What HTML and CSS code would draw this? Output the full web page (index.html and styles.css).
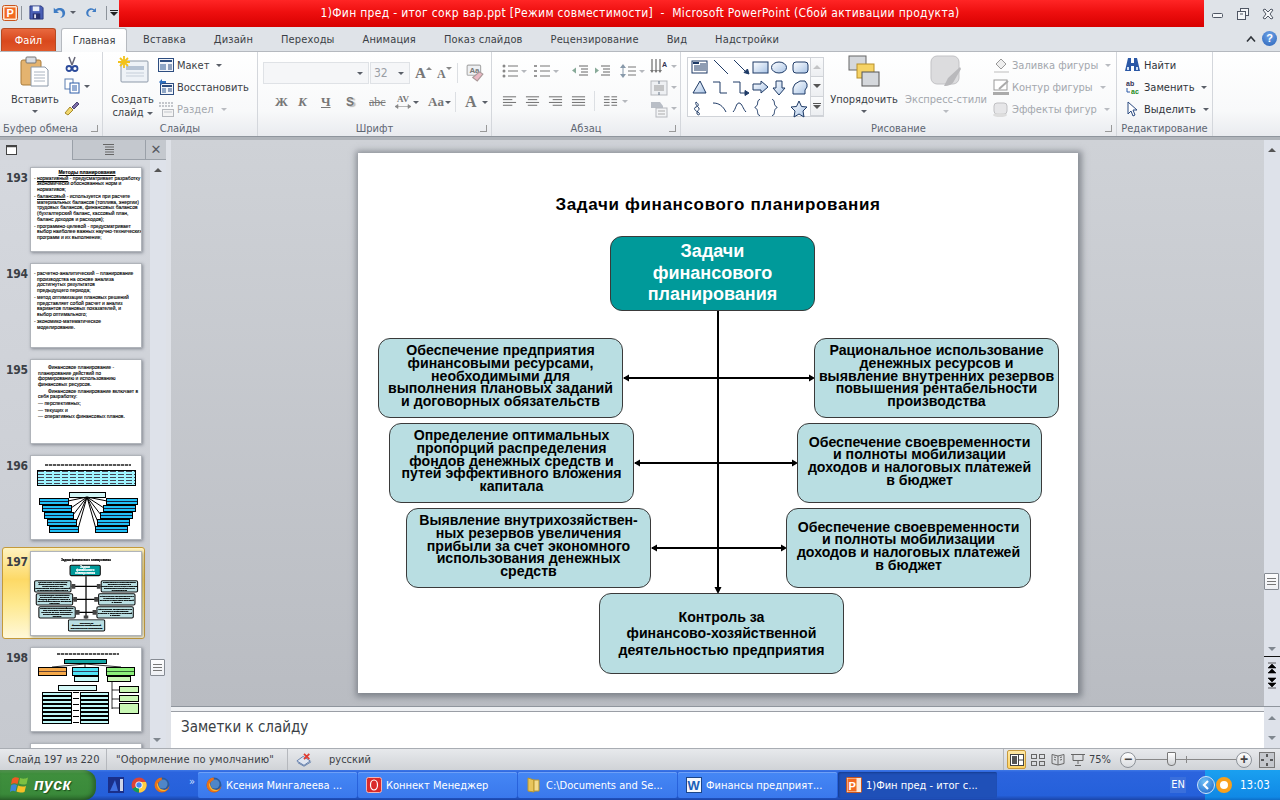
FILE: index.html
```html
<!DOCTYPE html>
<html lang="ru">
<head>
<meta charset="utf-8">
<title>PowerPoint</title>
<link rel="stylesheet" href="styles.css">
</head>
<body>
<svg class="defs" width="0" height="0">
  <defs>
    <linearGradient id="gblue" x1="0" y1="0" x2="1" y2="1"><stop offset="0" stop-color="#fff"/><stop offset="1" stop-color="#a9c4e6"/></linearGradient>
    <symbol id="ff" viewBox="0 0 16 16"><circle cx="8" cy="8" r="7.500" fill="#2a5a9e"/><circle cx="9" cy="7" r="4.500" fill="#4f86c8"/><path d="M8 .5A7.500 7.500 0 1 0 15.500 8C15 11 12 13 9 13 5.500 13 3.500 10 4 7 4.500 5 6 3.500 8 3 7.500 2 7.800 1 8 .5z" fill="#e8701a"/><path d="M3 6C2.500 9 4 13 8 14c2 .3 4-.3 5-1.500C10 13.500 5 13 4 7z" fill="#f7b52c"/></symbol>
    <symbol id="chrome" viewBox="0 0 16 16"><circle cx="8" cy="8" r="7.500" fill="#db4437"/><path d="M8 8 1.500 11.700A7.500 7.500 0 0 0 8 15.500z" fill="#0f9d58"/><path d="M8 15.500A7.500 7.500 0 0 0 15 5H8z" fill="#ffcd40"/><circle cx="8" cy="8" r="3.600" fill="#fff"/><circle cx="8" cy="8" r="2.700" fill="#4285f4"/></symbol>
  </defs>
</svg>

<header class="titlebar">
  <div class="qat">
    <svg class="ic16 logo" viewBox="0 0 16 16"><rect x=".5" y=".5" width="15" height="15" rx="2" fill="#fbe8d6" stroke="#c9541d"/><rect x="2.500" y="2.500" width="11" height="11" fill="#f26a21"/><text x="4.500" y="12" class="logo-p">P</text></svg>
    <span class="qsep"></span>
    <svg class="ic16 save" viewBox="0 0 16 16"><path d="M1 1h12l2 2v12H1z" fill="#4a5fb5" stroke="#2b3a80"/><rect x="4" y="1.500" width="7" height="5" fill="#e9eef7"/><rect x="4" y="9" width="8" height="6" fill="#26306e"/><rect x="5.500" y="10" width="2" height="4" fill="#dde"/></svg>
    <svg class="ic16 undo" viewBox="0 0 16 16"><path d="M2 2v6h6L5.700 5.800C8 4 12 5 12 9c0 2-1 3.500-3 4.500 4 0 6-2.500 6-5.500 0-5-6-7.500-10.800-4z" fill="#3f7cc4"/></svg>
    <span class="caret qc"></span>
    <svg class="ic16 redo" viewBox="0 0 16 16"><path d="M13.500 2.500v5h-5l2-2C8 3.500 4 5.500 4 9c0 2 1.500 3.800 4 4-4 1-6.500-1.500-6.500-4.500C1.500 4 7 .5 11.500 4.200z" fill="#3f7cc4"/></svg>
    <span class="qsep s2"></span>
    <span class="custom"><i></i><b class="caret"></b></span>
  </div>
  <div class="title-red">1)Фин пред - итог сокр вар.ppt [Режим совместимости]&nbsp; -&nbsp; Microsoft PowerPoint (Сбой активации продукта)</div>
  <div class="winctl">
    <svg width="12" height="12" viewBox="0 0 12 12"><rect x=".5" y="5.500" width="10" height="4" rx="1" fill="#f4f6f8" stroke="#4f5663"/></svg>
    <svg width="12" height="12" viewBox="0 0 12 12"><rect x="3.500" y=".5" width="8" height="7" fill="#f4f6f8" stroke="#4f5663"/><rect x=".5" y="3.500" width="8" height="8" fill="#f4f6f8" stroke="#4f5663"/><path d="M3 6h3" stroke="#4f5663"/></svg>
    <svg width="12" height="12" viewBox="0 0 12 12"><path d="M1 2 3 1l3 3 3-3 2 1-3 4 3 4-2 1-3-3-3 3-2-1 3-4z" fill="#f4f6f8" stroke="#4f5663"/></svg>
  </div>
</header>

<nav class="tabs">
  <span class="tab-file">Файл</span>
  <span class="tab active">Главная</span>
  <span class="tab">Вставка</span>
  <span class="tab">Дизайн</span>
  <span class="tab">Переходы</span>
  <span class="tab">Анимация</span>
  <span class="tab">Показ слайдов</span>
  <span class="tab">Рецензирование</span>
  <span class="tab">Вид</span>
  <span class="tab">Надстройки</span>
  <span class="tab-right">
    <svg width="10" height="8" viewBox="0 0 10 8"><path d="M1 6.500 5 2l4 4.500" fill="none" stroke="#30343a" stroke-width="1.600"/></svg>
    <span class="help">?</span>
  </span>
</nav>

<section class="ribbon">
  <div class="group g-clip">
    <div class="gbody">
      <div class="big paste">
        <svg class="bigic" width="30" height="32" viewBox="0 0 30 32"><rect x="1" y="4" width="20" height="25" rx="2" fill="#e4b36f" stroke="#a97c3c"/><rect x="6" y="1" width="10" height="6" rx="1" fill="#d8dce2" stroke="#777"/><path d="M11 11h14l3 3v16H11z" fill="#fff" stroke="#8b98a8"/><path d="M14 16h11M14 19h11M14 22h11M14 25h11" stroke="#aab4c0"/></svg>
        <span class="blabel">Вставить</span>
        <span class="caret"></span>
      </div>
      <div class="smalls icons-only">
        <svg class="ic16" viewBox="0 0 16 16"><path d="M5 1l3 8M11 1 8 9" stroke="#667" stroke-width="1.500"/><circle cx="5" cy="12.500" r="2.500" fill="none" stroke="#2b4a9a" stroke-width="1.800"/><circle cx="11" cy="12.500" r="2.500" fill="none" stroke="#2b4a9a" stroke-width="1.800"/></svg>
        <span class="row-ic"><svg class="ic16" viewBox="0 0 16 16"><rect x="1" y="1" width="8" height="10" fill="#fff" stroke="#5b7cb0"/><rect x="6" y="5" width="9" height="10" fill="#fff" stroke="#2c5ca8"/><path d="M8 8h5M8 10h5M8 12h5" stroke="#2c5ca8"/></svg><span class="caret"></span></span>
        <svg class="ic16" viewBox="0 0 16 16"><path d="M1 13l5-6 3 3-5 5z" fill="#f1d76e" stroke="#a68a2a"/><path d="M8 7l5-5 2 2-5 5z" fill="#7b6ea8" stroke="#4a4470"/></svg>
      </div>
    </div>
    <div class="glabel lead">Буфер обмена<i class="launch"></i></div>
  </div>

  <div class="group g-slides">
    <div class="gbody">
      <div class="big newslide">
        <svg class="bigic" width="32" height="28" viewBox="0 0 32 28"><rect x="4" y="5" width="27" height="21" rx="1" fill="#eef2f7" stroke="#8d99a8"/><rect x="9" y="10" width="18" height="4" fill="#b6c3d4"/><path d="M9 17h18M9 20h18" stroke="#c5ced9"/><path d="M7 0v12M1 6h12M3 2l8 8M11 2l-8 8" stroke="#f2c21a" stroke-width="1.800"/></svg>
        <span class="blabel">Создать</span>
        <span class="blabel">слайд <span class="caret"></span></span>
      </div>
      <div class="smalls">
        <div class="srow"><svg class="ic16" viewBox="0 0 16 16"><rect x=".5" y="1.500" width="15" height="13" fill="#f2f5fa" stroke="#2d4d80"/><rect x="2" y="3" width="12" height="2" fill="#2d4d80"/><rect x="2" y="7" width="6" height="6" fill="#8ea6c6"/><path d="M10 8h4M10 10h4M10 12h4" stroke="#2d4d80"/></svg><span>Макет</span><span class="caret"></span></div>
        <div class="srow"><svg class="ic16" viewBox="0 0 16 16"><rect x="2.500" y="4.500" width="13" height="11" fill="#f2f5fa" stroke="#2d4d80"/><rect x="4" y="6" width="10" height="2" fill="#2d4d80"/><rect x="4" y="9" width="4" height="5" fill="#8ea6c6"/><path d="M10 10h4M10 12h4" stroke="#2d4d80"/><path d="M1 3l3-3v2h4v2H4v2z" fill="#2d6fc0"/></svg><span>Восстановить</span></div>
        <div class="srow off"><svg class="ic16" viewBox="0 0 16 16"><path d="M1 2h14M1 5h14" stroke="#c4c7cc" stroke-dasharray="2 1" stroke-width="2"/><rect x="4.500" y="8.500" width="11" height="7" fill="#f4f4f4" stroke="#b5b8bd"/><path d="M6 11h8" stroke="#c4c7cc"/></svg><span>Раздел</span><span class="caret"></span></div>
      </div>
    </div>
    <div class="glabel">Слайды</div>
  </div>

  <div class="group g-font">
    <div class="gbody col">
      <div class="frow r1">
        <span class="combo cfont"><span class="caret"></span></span>
        <span class="combo csize"><em>32</em><span class="caret"></span></span>
        <span class="fbtn bigA">A<sup class="up"></sup></span>
        <span class="fbtn smallA">A<sup class="dn"></sup></span>
        <i class="vsep"></i>
        <svg class="ic16 eraser" viewBox="0 0 16 16"><rect x="1" y="1" width="12" height="9" rx="1" fill="#eef0f3" stroke="#aaa"/><text x="3" y="8" class="tiny">Aa</text><path d="M6 12l6-5 3 2-5 6z" fill="#e9b9c4" stroke="#a99"/></svg>
      </div>
      <div class="frow r2">
        <b class="fm serif">Ж</b><b class="fm serif it">К</b><b class="fm serif ul">Ч</b><b class="fm shadow">S</b><span class="fm strike">abc</span>
        <span class="fm av"><b>AV</b><svg width="16" height="5" viewBox="0 0 16 5"><path d="M0 2.500h16M0 2.500l3-2v4zM16 2.500l-3-2v4z" fill="#888" stroke="#888" stroke-width=".6"/></svg></span><span class="caret"></span>
        <span class="fm aa">Aa</span><span class="caret"></span>
        <i class="vsep"></i>
        <b class="fm colorA">A</b><span class="caret"></span>
      </div>
    </div>
    <div class="glabel">Шрифт<i class="launch"></i></div>
  </div>

  <div class="group g-para">
    <div class="gbody para">
      <div class="pmain">
        <div class="frow pr1">
          <svg class="ic16" viewBox="0 0 16 16"><g fill="#888"><circle cx="2" cy="3" r="1.500"/><circle cx="2" cy="8" r="1.500"/><circle cx="2" cy="13" r="1.500"/></g><path d="M6 3h10M6 8h10M6 13h10" stroke="#777"/></svg><span class="caret"></span>
          <svg class="ic16" viewBox="0 0 16 16"><path d="M0 2h3v2H0zM0 7h3v2H0zM0 12h3v2H0z" fill="#999"/><path d="M6 3h10M6 8h10M6 13h10" stroke="#777"/></svg><span class="caret"></span>
          <svg class="ic16 gapl" viewBox="0 0 16 16"><path d="M7 3h9M9 6h7M9 9h7M7 12h9" stroke="#666"/><path d="M0 7.500l4-3v6z" fill="#8a9"/></svg>
          <svg class="ic16" viewBox="0 0 16 16"><path d="M7 3h9M9 6h7M9 9h7M7 12h9" stroke="#666"/><path d="M5 7.500l-4-3v6z" fill="#8a9"/></svg>
          <svg class="ic16 gapl2" viewBox="0 0 16 16"><path d="M3 1l3 4H0zM3 15l3-4H0z" fill="#89a"/><path d="M3 5v6" stroke="#89a"/><path d="M8 4h8M8 8h8M8 12h8" stroke="#777"/></svg><span class="caret"></span>
        </div>
        <div class="frow pr2">
          <svg class="ic16" viewBox="0 0 16 16"><path d="M1 3h14M1 6h10M1 9h14M1 12h10" stroke="#666"/></svg>
          <svg class="ic16" viewBox="0 0 16 16"><path d="M1 3h14M3 6h10M1 9h14M3 12h10" stroke="#666"/></svg>
          <svg class="ic16" viewBox="0 0 16 16"><path d="M1 3h14M5 6h10M1 9h14M5 12h10" stroke="#666"/></svg>
          <svg class="ic16" viewBox="0 0 16 16"><path d="M1 3h14M1 6h14M1 9h14M1 12h14" stroke="#666"/></svg>
          <i class="vsep"></i>
          <svg class="ic16" viewBox="0 0 16 16"><path d="M1 3h6M1 6h6M1 9h6M1 12h6M9 3h6M9 6h6M9 9h6M9 12h6" stroke="#666"/></svg><span class="caret"></span>
        </div>
      </div>
      <div class="pside">
        <div class="prow"><svg class="ic18" viewBox="0 0 18 18"><path d="M2 1v12M6 1v12M10 1v12" stroke="#777" stroke-width="1.300"/><path d="M0 12l2 3 2-3zM4 12l2 3 2-3zM8 12l2 3 2-3z" fill="#777"/><text x="12" y="9" class="tiny dark">A</text></svg><span class="caret"></span></div>
        <div class="prow"><svg class="ic18" viewBox="0 0 18 18"><rect x="1" y="2" width="16" height="14" fill="#eef0f3" stroke="#b5b8bd"/><path d="M4 7h10M4 9h10M4 11h10" stroke="#999"/><path d="M9 2v3M9 16v-3" stroke="#678"/></svg><span class="caret"></span></div>
        <div class="prow"><svg class="ic18" viewBox="0 0 18 18"><path d="M1 2h9l3 4v2H1z" fill="#b9bec6"/><rect x="6" y="8" width="11" height="9" fill="#f3f4f6" stroke="#b5b8bd"/><path d="M8 11h7M8 14h7" stroke="#aaa"/></svg><span class="caret"></span></div>
      </div>
    </div>
    <div class="glabel">Абзац<i class="launch"></i></div>
  </div>

  <div class="group g-draw">
    <div class="gbody">
      <div class="gallery">
        <svg class="shapes" width="120" height="60" viewBox="0 0 120 60" fill="url(#gblue)" stroke="#1e3a66">
          <rect x="3" y="3" width="15" height="12" fill="#fff"/><rect x="4" y="4" width="6" height="2" fill="#1e3a66" stroke="none"/><path d="M11 6h6M5 8h12M5 10h12M5 12h12" fill="none"/>
          <path d="M25 2l14 14M45 2l13 13" fill="none"/><path d="M60 16l-5-1.500 3.500-3.500z" fill="#1e3a66"/>
          <rect x="64" y="4" width="15" height="11"/><ellipse cx="90" cy="9.500" rx="7.500" ry="5.500"/><rect x="104" y="4" width="15" height="11" rx="3"/>
          <path d="M11 23l6 12H4z"/><path d="M24 24h7v11h7M44 24h7v11h6" fill="none"/><path d="M60 35l-4-2.500v5z" fill="#1e3a66"/>
          <path d="M64 26h8v-3l7 6-7 6v-3h-8z"/><path d="M87 23h6v7h3l-6 7-6-7h3z"/><path d="M106 26l5-3h5l2 3v3l-2 3v4h-12v-6z"/>
          <path d="M7 44c3 2 3 4 0 5s-1 4 2 5c3 2 1 4-1 2-1-3 3-4 2-6-2-2-4-4-3-6z" fill="none"/><path d="M24 45c6 0 10 3 13 9M44 54c3-3 3-9 6-9s4 6 7 9" fill="none"/>
          <path d="M71 43c-3 0-2 5-3 6s-2 1-2 2 1 0 2 2 0 6 3 6M83 43c3 0 2 5 3 6s2 1 2 2-1 0-2 2 0 6-3 6" fill="none" transform="translate(0 -1.500)"/>
          <path d="M110 43l2.500 5.500 5.500.5-4 4 1 6-5-3-5 3 1-6-4-4 5.500-.5z"/>
        </svg>
        <div class="gscroll"><span><i class="tri up off"></i></span><span><i class="tri"></i></span><span><i class="bar"></i><i class="tri"></i></span></div>
      </div>
      <div class="big arrange">
        <svg class="bigic" width="32" height="32" viewBox="0 0 32 32"><rect x="1" y="1" width="17" height="14" fill="#d5d8dc" stroke="#666"/><rect x="9" y="9" width="17" height="14" fill="#f6d365" stroke="#b8902a"/><rect x="14" y="17" width="17" height="14" fill="#d5d8dc" stroke="#555"/></svg>
        <span class="blabel">Упорядочить</span>
        <span class="caret"></span>
      </div>
      <div class="big express off">
        <svg class="bigic" width="32" height="32" viewBox="0 0 32 32"><rect x="1" y="1" width="28" height="28" rx="6" fill="#dcdcde" stroke="#c2c2c5"/><path d="M30 12 18 23l-4 8c5 0 9-2 10-5l7-12z" fill="#b9b9bc"/></svg>
        <span class="blabel">Экспресс-стили</span>
        <span class="caret"></span>
      </div>
      <div class="smalls shapefmt">
        <div class="srow off"><svg class="ic16" viewBox="0 0 16 16"><path d="M3 7l5-5 5 5-5 5z" fill="#eee" stroke="#999"/><path d="M1 14h15v2H1z" fill="#ddd"/></svg><span>Заливка фигуры</span><span class="caret"></span></div>
        <div class="srow off"><svg class="ic16" viewBox="0 0 16 16"><rect x="1" y="1" width="13" height="10" fill="#fff" stroke="#999"/><path d="M6 10 15 2" stroke="#aaa" stroke-width="2"/><rect x="0" y="13" width="16" height="3" fill="#aaa"/></svg><span>Контур фигуры</span><span class="caret"></span></div>
        <div class="srow off"><svg class="ic16" viewBox="0 0 16 16"><rect x="1" y="2" width="13" height="11" rx="3" fill="#e6e6e8" stroke="#c0c0c3"/><ellipse cx="7" cy="14" rx="7" ry="2" fill="#ddd"/></svg><span>Эффекты фигур</span><span class="caret"></span></div>
      </div>
    </div>
    <div class="glabel">Рисование<i class="launch"></i></div>
  </div>

  <div class="group g-edit">
    <div class="gbody">
      <div class="smalls">
        <div class="srow dark"><svg class="ic16" viewBox="0 0 16 16"><path d="M3 1h3v5h3V1h3l3 13H9V9H6v5H0z" fill="#2b58a6"/><path d="M2 10h2v3H2zM11 10h2v3h-2z" fill="#cfe0f5"/></svg><span>Найти</span></div>
        <div class="srow dark"><svg class="ic16" viewBox="0 0 16 16"><text x="1" y="7" class="tiny dark">ab</text><text x="6" y="15" class="tiny green">ac</text><path d="M2 9v4h3" fill="none" stroke="#2b58a6"/></svg><span>Заменить</span><span class="caret"></span></div>
        <div class="srow dark"><svg class="ic16" viewBox="0 0 16 16"><path d="M3 1v12l3-3 2 5 2-1-2-5h4z" fill="#fff" stroke="#2b4a80"/></svg><span>Выделить</span><span class="caret"></span></div>
      </div>
    </div>
    <div class="glabel">Редактирование</div>
  </div>
</section>

<main class="work">
  <aside class="panel">
    <div class="ptabs">
      <span class="ptab on"><svg width="12" height="11" viewBox="0 0 12 11"><rect x=".5" y=".5" width="10" height="9" fill="#fff" stroke="#444"/><path d="M1 1.500h9" stroke="#444" stroke-width="1.500"/></svg></span>
      <span class="ptab lines"><svg width="12" height="11" viewBox="0 0 12 11"><path d="M0 .5h11M2 3h9M2 5.500h9M2 8h9M2 10.500h9" stroke="#666"/></svg></span>
      <span class="ptab x">✕</span>
    </div>
    <div class="pbody">
      <div class="thumbs">
        <div class="titem"><span class="num">193</span><div class="thumb txt">
          <p class="tt">Методы планирования</p>
          <ul><li><u>нормативный</u> - предусматривает разработку<br>экономически обоснованных норм и<br>нормативов;</li><li><u>балансовый</u> - используется при расчете<br>материальных балансов (топлива, энергии)<br>трудовых балансов, финансовых балансов<br>(бухгалтерский баланс, кассовый план,<br>баланс доходов и расходов);</li><li>программно-целевой - предусматривает<br>выбор наиболее важных научно-технических<br>программ и их выполнение;</li></ul>
        </div></div>
        <div class="titem"><span class="num">194</span><div class="thumb txt t194">
          <ul><li>расчетно-аналитический – планирование<br>производства на основе анализа<br>достигнутых результатов<br>предыдущего периода;</li><li>метод оптимизации плановых решений<br>представляет собой расчет и анализ<br>вариантов плановых показателей, и<br>выбор оптимального;</li><li>экономико-математическое<br>моделирование.</li></ul>
        </div></div>
        <div class="titem"><span class="num">195</span><div class="thumb txt t195">
          <p class="ind">Финансовое планирование -<br>планирование действий по<br>формированию и использованию<br>финансовых ресурсов.</p>
          <p class="ind">Финансовое планирование включает в<br>себя разработку:</p>
          <p class="dash">— перспективных;</p><p class="dash">— текущих и</p><p class="dash">— оперативных финансовых планов.</p>
        </div></div>
        <div class="titem"><span class="num">196</span><div class="thumb t196">
          <div class="m-title"></div>
          <div class="m-cyanbox"></div>
          <div class="m-head"></div>
          <svg class="m-rays" width="110" height="48" viewBox="0 0 110 48" stroke="#000" stroke-width="1"><path d="M56 3 37 7M56 3 40 14M56 3 42 21M56 3 45 28M56 3 47 35M56 3 76 7M56 3 73 14M56 3 70 21M56 3 67 28M56 3 65 35"/></svg>
          <i class="bl b1"></i><i class="bl b2"></i><i class="bl b3"></i><i class="bl b4"></i><i class="bl b5"></i>
          <i class="bl b6"></i><i class="bl b7"></i><i class="bl b8"></i><i class="bl b9"></i><i class="bl b10"></i>
        </div></div>
        <div class="titem current"><span class="num">197</span><div class="thumb t197"><div class="mini-wrap">
          <div class="slide-inner">
            <h2 class="sl-title">Задачи финансового планирования</h2>
            <svg class="conn" width="720" height="540" viewBox="0 0 720 540"><path d="M360 158V435M266 225H455M277 310H438M294 395H427" stroke="#000" stroke-width="8" fill="none"/><path d="M266 210h24v30h-24zM431 210h24v30h-24zM277 295h24v30h-24zM414 295h24v30h-24zM294 380h24v30h-24zM403 380h24v30h-24zM345 415h30v20h-30z" fill="#444"/></svg>
            <div class="nd main n0">Задачи<br>финансового<br>планирования</div>
            <div class="nd n1">Обеспечение предприятия<br>финансовыми ресурсами,<br>необходимыми для<br>выполнения плановых заданий<br>и договорных обязательств</div>
            <div class="nd n2">Определение оптимальных<br>пропорций распределения<br>фондов денежных средств и<br>путей эффективного вложения<br>капитала</div>
            <div class="nd n3">Выявление внутрихозяйствен-<br>ных резервов увеличения<br>прибыли за счет экономного<br>использования денежных<br>средств</div>
            <div class="nd n4">Рациональное использование<br>денежных ресурсов и<br>выявление внутренних резервов<br>повышения рентабельности<br>производства</div>
            <div class="nd n5">Обеспечение своевременности<br>и полноты мобилизации<br>доходов и налоговых платежей<br>в бюджет</div>
            <div class="nd n6">Обеспечение своевременности<br>и полноты мобилизации<br>доходов и налоговых платежей<br>в бюджет</div>
            <div class="nd n7">Контроль за<br>финансово-хозяйственной<br>деятельностью предприятия</div>
          </div>
        </div></div></div>
        <div class="titem"><span class="num">198</span><div class="thumb t198">
          <div class="m-title t2"></div>
          <svg class="m-links" width="110" height="83" viewBox="0 0 110 83" fill="none" stroke="#000" stroke-width=".8"><path d="M54 16 21 19M54 16v3M54 16 90 19M81 34v27M81 42h7M81 51h7M81 60h7"/></svg>
          <i class="c c1"></i><i class="c c2"></i><i class="c c3"></i><i class="c c4"></i><i class="c c5"></i><i class="c c6"></i><i class="c c7"></i><i class="c c8"></i>
          <i class="c c9"></i><i class="c c10"></i><i class="c c11"></i><i class="c c12"></i><i class="c c13"></i>
        </div></div>
        <div class="titem"><span class="num"></span><div class="thumb"></div></div>
      </div>
      <div class="vscroll small-scroll">
        <i class="tri up"></i>
        <span class="thumbgrip g1"><b></b></span>
        <i class="tri dim"></i>
      </div>
    </div>
  </aside>

  <div class="center">
    <div class="editor">
      <div class="stage">
        <div class="slide">
          <div class="slide-inner">
            <h2 class="sl-title">Задачи финансового планирования</h2>
            <svg class="conn" width="720" height="540" viewBox="0 0 720 540">
              <path d="M360 158V435M266 225H455M277 310H438M294 395H427" stroke="#000" stroke-width="2" fill="none"/>
              <path d="M265 225l6-3.500v7zM457 225l-6-3.500v7zM276 310l6-3.500v7zM440 310l-6-3.500v7zM293 395l6-3.500v7zM429 395l-6-3.500v7zM360 441l-3.500-7h7z" fill="#000"/>
            </svg>
            <div class="nd main n0">Задачи<br>финансового<br>планирования</div>
            <div class="nd n1">Обеспечение предприятия<br>финансовыми ресурсами,<br>необходимыми для<br>выполнения плановых заданий<br>и договорных обязательств</div>
            <div class="nd n2">Определение оптимальных<br>пропорций распределения<br>фондов денежных средств и<br>путей эффективного вложения<br>капитала</div>
            <div class="nd n3">Выявление внутрихозяйствен-<br>ных резервов увеличения<br>прибыли за счет экономного<br>использования денежных<br>средств</div>
            <div class="nd n4">Рациональное использование<br>денежных ресурсов и<br>выявление внутренних резервов<br>повышения рентабельности<br>производства</div>
            <div class="nd n5">Обеспечение своевременности<br>и полноты мобилизации<br>доходов и налоговых платежей<br>в бюджет</div>
            <div class="nd n6">Обеспечение своевременности<br>и полноты мобилизации<br>доходов и налоговых платежей<br>в бюджет</div>
            <div class="nd n7">Контроль за<br>финансово-хозяйственной<br>деятельностью предприятия</div>
          </div>
        </div>
      </div>
      <div class="vscroll main-scroll">
        <i class="tri up"></i>
        <span class="thumbgrip g2"><b></b></span>
        <i class="tri dim"></i>
        <span class="pager"><svg width="10" height="12" viewBox="0 0 10 12"><path d="M0 1h8M4 2 0 6h8zM4 7 0 11h8z" fill="#000" stroke="#000" stroke-width=".6"/></svg><svg width="10" height="12" viewBox="0 0 10 12"><path d="M0 11h8M4 10 0 6h8zM4 5 0 1h8z" fill="#000" stroke="#000" stroke-width=".6"/></svg></span>
      </div>
    </div>
    <div class="notes">
      <div class="notes-text">Заметки к слайду</div>
      <div class="vscroll notes-scroll"><i class="tri up dim"></i><i class="tri dim"></i></div>
    </div>
  </div>
</main>

<footer class="status">
  <span class="st st1">Слайд 197 из 220</span>
  <span class="st st2">"Оформление по умолчанию"</span>
  <span class="st st3"><svg class="ic16" viewBox="0 0 18 16"><path d="M1 9l7-5 8 5-7 5z" fill="#dfe6f2" stroke="#5a78a8"/><path d="M2 11l7 4 8-5" fill="none" stroke="#5a78a8"/><path d="M9 1l6 6M15 1 9 7" stroke="#e03c31" stroke-width="2"/></svg><span>русский</span></span>
  <span class="st-right">
    <span class="vb on"><svg width="14" height="12" viewBox="0 0 14 12"><rect x=".5" y=".5" width="13" height="11" fill="#fff" stroke="#444"/><path d="M8.500 .5v11M8.500 6h5" stroke="#444"/><rect x="2" y="2" width="5" height="8" fill="#555"/></svg></span>
    <span class="vb"><svg width="14" height="12" viewBox="0 0 14 12" fill="none" stroke="#666"><rect x=".5" y=".5" width="5" height="4"/><rect x="8.500" y=".5" width="5" height="4"/><rect x=".5" y="7.500" width="5" height="4"/><rect x="8.500" y="7.500" width="5" height="4"/></svg></span>
    <span class="vb"><svg width="14" height="12" viewBox="0 0 14 12" fill="none" stroke="#666"><path d="M7 2 1 .5v9L7 11l6-1.500v-9zM7 2v9M3 3l2 .5M3 5.500l2 .5M9 3.500l2-.5M9 6l2-.5"/></svg></span>
    <span class="vb"><svg width="14" height="12" viewBox="0 0 14 12" fill="none" stroke="#666"><path d="M0 .5h14M2 .5h10v6H2zM7 7v3M4 11.500h6"/></svg></span>
    <span class="pct">75%</span>
    <span class="zoombtn">−</span>
    <span class="slider"><i class="tick"></i><i class="knob"></i></span>
    <span class="zoombtn">+</span>
    <span class="fit"><svg width="14" height="14" viewBox="0 0 14 14"><path d="M7 1v3M7 10v3M1 7h3M10 7h3" stroke="#333" stroke-width="1.500"/></svg></span>
  </span>
</footer>

<footer class="taskbar">
  <span class="start">
    <svg width="20" height="18" viewBox="0 0 20 18"><path d="M2 3c2-2 4-2 7-1L7.500 8C5 7 3 7 1 8.500z" fill="#ee5a24"/><path d="M10 2c3 1 5 1 8-.5L16.500 8c-3 1-5 .5-7.500-.5z" fill="#7cc142"/><path d="M1 9.500C3 8 5 8 7 9l-1.500 6.500C3.500 14.500 2 14.500 0 16z" fill="#3d85d8"/><path d="M8 9.500c2.500 1 5 1.500 8 .5l-1.500 6c-3 1-5 .5-8-.5z" fill="#f6c026"/></svg>
    <span class="start-t">пуск</span>
  </span>
  <span class="ql">
    <svg class="ic16" viewBox="0 0 16 16"><rect width="16" height="16" fill="#1a2f8a"/><path d="M2 14 7 3l3 11z" fill="#3f6fe0"/><rect x="12" y="2" width="3" height="12" fill="#cfd6e8"/></svg>
    <svg class="ic16"><use href="#chrome"/></svg>
    <svg class="ic16"><use href="#ff"/></svg>
    <span class="more">»</span>
  </span>
  <span class="tasks">
    <span class="task"><svg class="ic16"><use href="#ff"/></svg><span>Ксения Мингалеева ...</span></span>
    <span class="task"><svg class="ic16" viewBox="0 0 16 16"><rect x=".5" y=".5" width="15" height="15" rx="2" fill="#d92a2a" stroke="#f3b5b5"/><ellipse cx="8" cy="8" rx="3.500" ry="5" fill="none" stroke="#fff" stroke-width="1.200"/></svg><span>Коннект Менеджер</span></span>
    <span class="task"><svg class="ic16" viewBox="0 0 16 16"><path d="M2 1l6 2v12l-6-1z" fill="#e8c55c" stroke="#b8962e"/><path d="M8 3h5v11H8z" fill="#f4db8c" stroke="#b8962e"/></svg><span>C:\Documents and Se...</span></span>
    <span class="task"><svg class="ic16" viewBox="0 0 16 16"><rect x=".5" y=".5" width="15" height="15" fill="#f5f8fd" stroke="#1c4587"/><text x="1.500" y="13" class="word">W</text></svg><span>Финансы предприят...</span></span>
    <span class="task active"><svg class="ic16" viewBox="0 0 16 16"><rect x=".5" y=".5" width="15" height="15" rx="1" fill="#fbe8d6" stroke="#c9541d"/><rect x="1.500" y="1.500" width="9" height="13" fill="#f26a21"/><text x="2.500" y="12.500" class="logo-p">P</text></svg><span>1)Фин пред - итог с...</span></span>
  </span>
  <span class="lang">EN</span>
  <span class="tray">
    <span class="chev"><svg width="10" height="10" viewBox="0 0 10 10"><path d="M7 1 3 5l4 4" fill="none" stroke="#fff" stroke-width="2.200"/></svg></span>
    <span class="orange"></span>
    <span class="clock">13:03</span>
  </span>
</footer>
</body>
</html>
```

FILE: styles.css
```css
* { box-sizing: border-box; }
html, body { margin: 0; padding: 0; }
body {
  width: 1280px; height: 800px; overflow: hidden;
  display: flex; flex-direction: column;
  font-family: "DejaVu Sans Condensed", "DejaVu Sans", sans-serif;
  font-size: 11px; color: #3b3f46; background: #dfe3e8;
}
svg { display: block; flex: none; }
.defs { position: absolute; }
.ic16 { width: 16px; height: 16px; }
.ic18 { width: 18px; height: 18px; }
.caret { display: inline-block; width: 0; height: 0; border: 3px solid transparent; border-top: 3px solid #5a5f68; border-bottom: 0; flex: none; vertical-align: middle; }

/* title bar */
.titlebar { height: 27px; display: flex; flex: none; background: #dfe3e8; }
.qat { width: 119px; display: flex; align-items: center; padding-left: 2px; padding-bottom: 2px; }
.logo { margin-right: 3px; }
.logo-p { font: bold 11px "Liberation Sans", sans-serif; fill: #fff; }
.qsep { width: 1px; height: 14px; background: #8d939b; margin-right: 7px; }
.qsep.s2 { margin: 0 3px 0 8px; }
.save { width: 15px; height: 15px; margin-right: 8px; }
.undo { width: 14px; height: 14px; }
.qc { margin: 0 9px 0 4px; }
.redo { width: 13px; height: 13px; }
.custom { width: 8px; display: flex; flex-direction: column; gap: 1px; }
.custom i { height: 1px; background: #222; }
.custom .caret { border-top-color: #222; border-width: 4px; border-top-width: 4px; border-bottom: 0; }
.title-red {
  flex: 1; display: flex; align-items: center; justify-content: center;
  padding: 0 43px 2px 0;
  background: linear-gradient(#ff2525 0%, #ee0f0f 45%, #d80000 100%);
  color: #fff; font-size: 12px; white-space: pre; letter-spacing: .31px;
}
.winctl { width: 76px; display: flex; gap: 13px; padding: 8px 0 0 8px; }

/* tabs */
.tabs { height: 25px; flex: none; display: flex; align-items: stretch; background: #dfe3e8; border-bottom: 1px solid #b5b9bf; padding-top: 1px; }
.tab-file { width: 55px; margin-left: 1px; display: flex; align-items: center; justify-content: center; color: #fff; background: linear-gradient(#e8693f, #d9481d 55%, #e0582a); border: 1px solid #b64a22; border-bottom: 0; border-radius: 3px 3px 0 0; }
.tab { display: flex; align-items: center; padding: 0 14px; white-space: nowrap; color: #3b3f46; letter-spacing: .13px; }
.tab.active { background: linear-gradient(#fff, #f9fafb); border: 1px solid #b5b9bf; border-bottom: 1px solid #fff; border-radius: 3px 3px 0 0; margin: 0 2px 0 5px; height: 25px; padding: 0 10px; width: 66px; justify-content: center; letter-spacing: 0; }
.tab-right { margin-left: auto; display: flex; align-items: center; gap: 6px; padding-right: 3px; padding-bottom: 2px; }
.help { width: 15px; height: 15px; border-radius: 50%; background: radial-gradient(circle at 50% 30%, #6ea3e8, #2a63b8); color: #fff; font: bold 11px "Liberation Sans", sans-serif; text-align: center; line-height: 15px; }

/* ribbon */
.ribbon { height: 85px; flex: none; display: flex; background: linear-gradient(#fff 0%, #f8f9fa 70%, #e9ebef 100%); border-bottom: 1px solid #8f959d; }
.group { display: flex; flex-direction: column; border-right: 1px solid #d4d7dc; flex: none; }
.gbody { height: 70px; display: flex; }
.glabel { height: 14px; line-height: 14px; text-align: center; color: #5e6673; position: relative; white-space: nowrap; }
.glabel.lead { text-align: left; padding-left: 3px; }
.launch { position: absolute; right: 4px; top: 3px; width: 7px; height: 7px; border-right: 1px solid #999; border-bottom: 1px solid #999; }
.big { display: flex; flex-direction: column; align-items: center; color: #3b3f46; white-space: nowrap; }
.bigic { margin-top: 4px; }
.blabel { line-height: 13px; }
.smalls { display: flex; flex-direction: column; }
.srow { height: 22px; display: flex; align-items: center; gap: 3px; white-space: nowrap; color: #3b3f46; }
.srow > .caret { margin-left: 4px; }
.srow.off, .big.off { color: #a3a7ad; }
.srow.off .caret, .big.off .caret { border-top-color: #b9bcc1; }
.srow.dark { color: #30343a; }
.g-clip { width: 103px; }
.paste { width: 60px; margin-left: 5px; }
.paste .bigic { margin: 4px 0 5px; }
.paste .caret { margin-top: 4px; }
.icons-only { padding: 1px 0 0 0; margin-left: -1px; }
.icons-only > svg { margin: 3px 0; }
.row-ic { display: flex; align-items: center; gap: 4px; margin: 3px 0; }
.g-slides { width: 155px; }
.newslide { width: 51px; margin-left: 4px; }
.newslide .bigic { margin: 4px 0 9px; }
.g-slides .smalls { padding: 2px 0 0 0; }

.g-font { width: 234px; }
.col { flex-direction: column; padding: 10px 0 0 5px; }
.frow { display: flex; align-items: center; }
.r1 { height: 22px; }
.combo { height: 22px; background: #f5f6f8; border: 1px solid #dfe2e6; display: flex; align-items: center; justify-content: flex-end; padding-right: 5px; }
.cfont { width: 106px; }
.csize { width: 40px; justify-content: space-between; padding-left: 3px; margin-left: 1px; }
.csize em { font-style: normal; color: #9a9ea5; font-size: 12px; }
.fbtn { font: bold 15px "Liberation Serif", serif; color: #777; position: relative; display: block; }
.bigA { margin-left: 5px; width: 22px; }
.smallA { font-size: 12px; width: 20px; padding-top: 2px; }
.fbtn sup { position: absolute; top: 2px; right: 5px; width: 0; height: 0; border: 3px solid transparent; }
.fbtn .up { border-bottom: 3px solid #888; border-top: 0; }
.fbtn .dn { border-top: 3px solid #888; border-bottom: 0; }
.vsep { width: 1px; height: 20px; background: #dcdfe3; display: block; flex: none; }
.eraser { width: 18px; height: 18px; margin-left: 8px; }
.tiny { font: bold 7px "Liberation Sans", sans-serif; fill: #777; }
.tiny.dark { fill: #335; }
.tiny.green { fill: #1a8a1a; }
.r2 { margin-top: 8px; height: 20px; padding-left: 12px; }
.fm { color: #777; font-size: 12px; display: inline-block; }
.serif { font-family: "Liberation Serif", serif; font-size: 13px; width: 23px; }
.it { font-style: italic; }
.ul { text-decoration: underline; width: 25px; }
.shadow { font-family: "Liberation Sans", sans-serif; text-shadow: 2px 1px 1px #bbb; width: 23px; }
.strike { text-decoration: line-through; width: 26px; font-family: "Liberation Serif", serif; }
.av { width: 16px; font-family: "Liberation Serif", serif; font-size: 9px; text-align: center; line-height: 9px; margin-right: 2px; }
.aa { margin-left: 9px; margin-right: 1px; font-size: 13px; font-family: "Liberation Serif", serif; font-weight: bold; }
.r2 .vsep { margin: 0 9px 0 4px; }
.colorA { font: bold 16px "Liberation Serif", serif; color: #777; margin-right: 6px; }

.g-para { width: 189px; }
.para { padding: 0 0 0 10px; }
.pmain { width: 148px; }
.pr1 { height: 30px; padding-top: 4px; margin-top: 2px; }
.pr1 svg { width: 16px; height: 16px; }
.pr1 .caret { margin-left: 3px; margin-right: 7px; border-top-color: #b5b8bd; }
.pr1 .gapl { margin-left: 6px; margin-right: 6px; }
.pr1 .gapl2 { margin-left: 10px; }
.pr2 { height: 20px; gap: 8px; margin-top: 7px; }
.pr2 svg { width: 15px; height: 15px; }
.pr2 .caret { margin-left: -4px; border-top-color: #b5b8bd; }
.pside { padding-top: 4px; }
.prow { height: 21px; display: flex; align-items: center; gap: 3px; }
.prow .caret { border-top-color: #b5b8bd; }

.g-draw { width: 436px; }
.gallery { width: 137px; height: 60px; margin: 5px 0 0 6px; display: flex; border: 1px solid #d0d3d8; background: #fff; position: relative; }
.shapes { margin-left: 1px; }
.gscroll { position: absolute; right: -1px; top: -1px; width: 14px; height: 60px; display: flex; flex-direction: column; border: 1px solid #d0d3d8; }
.gscroll span { flex: 1; display: flex; flex-direction: column; align-items: center; justify-content: center; gap: 1px; border-bottom: 1px solid #d0d3d8; background: linear-gradient(#fafbfc, #eceef1); }
.tri { display: block; width: 0; height: 0; border: 4px solid transparent; border-top: 4px solid #555; border-bottom: 0; flex: none; }
.tri.up { border-top: 0; border-bottom: 4px solid #555; }
.tri.off { opacity: .3; }
.tri.dim { border-top-color: #80878f; }
.tri.up.dim { border-bottom-color: #80878f; }
.bar { display: block; width: 8px; height: 1px; background: #555; }
.arrange { width: 76px; margin-left: 2px; }
.arrange .bigic { margin: 3px 0 6px; }
.arrange .caret { margin-top: 4px; }
.express { width: 84px; margin-left: 2px; }
.express .bigic { margin: 3px 0 6px; }
.express .caret { margin-top: 4px; }
.shapefmt { margin-left: 5px; padding-top: 2px; }
.g-edit { width: 96px; }
.g-edit .smalls { margin-left: 8px; padding-top: 2px; }

/* work area */
.work { height: 611px; flex: none; display: flex; background: #b0b4ba; padding-top: 3px; }
.panel { width: 171px; flex: none; display: flex; flex-direction: column; background: #d3d6dc; border-right: 5px solid #dee1e7; }
.ptabs { height: 20px; flex: none; display: flex; background: #c4c8ce; }
.ptab { display: flex; align-items: center; justify-content: center; }
.ptab.on { width: 72px; background: #d3d6dc; justify-content: flex-start; padding-left: 6px; }
.ptab.lines { width: 74px; border-left: 1px solid #9aa0a8; border-right: 1px solid #9aa0a8; border-bottom: 1px solid #9aa0a8; }
.ptab.x { flex: 1; font: bold 13px "DejaVu Sans", sans-serif; color: #55595f; border-bottom: 1px solid #9aa0a8; background: #c4c8ce; }
.pbody { flex: 1; display: flex; min-height: 0; overflow: hidden; }
.thumbs { width: 150px; flex: none; padding-top: 8px; display: flex; flex-direction: column; gap: 13px; background: linear-gradient(#d5d8de, #c6c9cf); height: 588px; overflow: hidden; }
.titem { display: flex; flex: none; width: 138px; height: 83px; margin-left: 3px; position: relative; }
.num { width: 28px; padding: 3px 0 0 3px; font: bold 12px "DejaVu Sans Condensed", "DejaVu Sans", sans-serif; color: #3b3f46; letter-spacing: -.2px; }
.thumb { width: 110px; height: 83px; background: #fff; box-shadow: 0 0 0 1px #b0b4ba, 1px 1px 3px 1px rgba(70,75,85,.55); overflow: hidden; flex: none; position: relative; }
.titem.current::before { content: ""; position: absolute; inset: -5px -4px -4px -1px; border: 1px solid #c49a3a; border-radius: 3px; background: linear-gradient(#fff3c0 0%, #fdd966 35%, #fee98f 62%, #fff8d8 100%); }
.titem.current .num, .titem.current .thumb { z-index: 1; }
.txt { font: 5px/5.700px "Liberation Sans", sans-serif; color: #000; padding: 2px 0 0 2px; -webkit-text-stroke: .12px #000; white-space: nowrap; }
.txt p { margin: 0; }
.txt .tt { text-align: center; font-weight: bold; text-decoration: underline; }
.txt ul { margin: 0; padding: 0 0 0 4px; list-style: "- "; }
.txt li { margin-bottom: 1.200px; }
.t194 { padding-top: 7px; }
.t195 { padding: 5px 0 0 7px; }
.t195 .ind { margin-bottom: .800px; text-indent: 10px; }
.t195 .dash { margin-top: 1px; }
.m-title { position: absolute; left: 14px; top: 8px; width: 86px; height: 2px; background: repeating-linear-gradient(90deg, #555 0 3px, #ccc 3px 4px); }
.m-title.t2 { left: 26px; top: 5px; width: 62px; }
.m-cyanbox { position: absolute; left: 6px; top: 14px; width: 99px; height: 16px; border: 1px solid #000; background: repeating-linear-gradient(90deg, transparent 0 6px, #9ff4ff 6px 8px), repeating-linear-gradient(#445 0 1px, #9ff4ff 1px 3px); }
.m-head { position: absolute; left: 38px; top: 36px; width: 37px; height: 6px; background: #d2f6f6; border: 1px solid #000; }
.m-rays { position: absolute; left: 0; top: 38px; }
.bl { position: absolute; height: 7px; width: 30px; background: linear-gradient(#21bff5 0 2px, #124 2px 3px, #21bff5 3px); border: 1px solid #000; display: block; }
.b1 { left: 8px; top: 42px; } .b2 { left: 11px; top: 49px; } .b3 { left: 13px; top: 56px; } .b4 { left: 16px; top: 63px; } .b5 { left: 18px; top: 70px; }
.b6 { left: 75px; top: 42px; width: 32px; } .b7 { left: 72px; top: 49px; width: 33px; } .b8 { left: 69px; top: 56px; width: 33px; } .b9 { left: 66px; top: 63px; width: 33px; } .b10 { left: 64px; top: 70px; width: 33px; }
.m-links { position: absolute; left: 0; top: 0; }
.c { position: absolute; display: block; border: 1px solid #000; }
.c1 { left: 33px; top: 11px; width: 43px; height: 5px; background: #14a5a5; }
.c2 { left: 7px; top: 19px; width: 29px; height: 9px; background: linear-gradient(#f5a94a 0 3px, #643 3px 4px, #f5a94a 4px); }
.c3 { left: 41px; top: 19px; width: 27px; height: 9px; background: linear-gradient(#4fe3f5 0 3px, #346 3px 4px, #4fe3f5 4px); }
.c4 { left: 75px; top: 19px; width: 29px; height: 9px; background: linear-gradient(#8cf07a 0 3px, #363 3px 4px, #8cf07a 4px); }
.c5 { left: 43px; top: 28px; width: 25px; height: 6px; background: #c5f8f8; }
.c6 { left: 76px; top: 28px; width: 24px; height: 6px; background: #c9f8b5; }
.c7 { left: 27px; top: 37px; width: 39px; height: 6px; background: #d5f8f8; }
.c8 { left: 11px; top: 44px; width: 30px; height: 32px; background: repeating-linear-gradient(#c0f8f8 0 2px, #000 2px 4px); }
.c9 { left: 49px; top: 44px; width: 29px; height: 32px; background: repeating-linear-gradient(#c0f8f8 0 2px, #000 2px 4px); }
.c10 { left: 88px; top: 38px; width: 20px; height: 7px; background: #c9f8b5; }
.c11 { left: 88px; top: 47px; width: 20px; height: 7px; background: #c9f8b5; }
.c12 { left: 88px; top: 55px; width: 20px; height: 11px; background: #c9f8b5; }
.c13 { left: 42px; top: 44px; width: 6px; height: 32px; border: 0; background: repeating-linear-gradient(#000 0 1px, #fff 1px 6px); }

.mini-wrap { width: 720px; height: 540px; transform: scale(.1528); transform-origin: 0 0; }
.t197 .nd { border: 7px solid #111; -webkit-text-stroke: 1.500px #000; }
.t197 .nd.main { -webkit-text-stroke: 1.500px #fff; }
.t197 .sl-title { -webkit-text-stroke: 1.500px #000; }

/* scrollbars */
.vscroll { background: #dee2ea; display: flex; flex-direction: column; align-items: center; position: relative; }
.small-scroll { width: 16px; flex: none; padding-top: 8px; height: 588px; }
.small-scroll .tri.dim { position: absolute; bottom: 6px; left: 3px; }
.thumbgrip { position: absolute; left: 0; width: 15px; height: 17px; background: linear-gradient(#fdfdfe, #eef0f4); border: 1px solid #868b93; border-radius: 1px; display: flex; align-items: center; justify-content: center; }
.thumbgrip b { width: 9px; height: 7px; background: repeating-linear-gradient(#777 0 1px, transparent 1px 3px); display: block; }
.g1 { top: 499px; }

.center { flex: 1; display: flex; flex-direction: column; min-width: 0; }
.editor { height: 566px; flex: none; display: flex; }
.stage { flex: 1; background: linear-gradient(#cfd2d7, #b9bcc2); padding: 13px 0 0 187px; }
.slide { width: 720px; height: 540px; background: #fff; box-shadow: 1px 1px 6px 3px rgba(80,86,95,.55); }
.slide-inner { position: relative; width: 720px; height: 540px; }
.sl-title { position: absolute; left: 0; right: 0; top: 42px; margin: 0; text-align: center; font: bold 17px/20px "Liberation Sans", sans-serif; color: #000; letter-spacing: .65px; }
.conn { position: absolute; left: 0; top: 0; }
.nd { position: absolute; width: 245px; height: 80px; padding-bottom: 4px; background: #b9dee2; border: 1px solid #3a3a3a; border-radius: 12px; display: flex; align-items: center; justify-content: center; text-align: center; font: bold 14.150px/12.700px "Liberation Sans", sans-serif; color: #000; white-space: nowrap; }
.main { left: 252px; top: 83px; width: 205px; height: 75px; padding-bottom: 0; background: #009a9a; color: #fff; font-size: 18px; line-height: 21.500px; }
.n1 { left: 20px; top: 185px; }
.n2 { left: 31px; top: 270px; }
.n3 { left: 48px; top: 355px; }
.n4 { left: 456px; top: 185px; }
.n5 { left: 439px; top: 270px; }
.n6 { left: 428px; top: 355px; }
.n7 { left: 241px; top: 440px; height: 81px; padding-bottom: 0; line-height: 16.500px; }

.main-scroll { width: 16px; flex: none; padding-top: 8px; }
.g2 { top: 433px; }
.main-scroll .tri.dim { margin-top: auto; margin-bottom: 5px; }
.pager { width: 100%; height: 50px; flex: none; border-top: 1px solid #111; display: flex; flex-direction: column; align-items: center; gap: 3px; padding: 5px 0 0 2px; }
.notes { flex: 1; display: flex; border-top: 1px solid #8f959d; background: #eef0f3; }
.notes-text { flex: 1; margin-top: 4px; background: #fff; border-top: 1px solid #9a9ea5; font-size: 15px; line-height: 30px; padding-left: 10px; color: #3b3f46; }
.notes-scroll { width: 16px; flex: none; padding-top: 9px; gap: 16px; }

/* status */
.status { height: 22px; flex: none; display: flex; align-items: center; background: linear-gradient(#e7e9ec, #d0d3d7); border-top: 1px solid #a9adb3; color: #3b3f46; }
.st { height: 100%; display: flex; align-items: center; border-right: 1px solid #b5b8bd; white-space: nowrap; }
.st1 { width: 107px; padding-left: 8px; }
.st2 { width: 181px; padding-left: 9px; letter-spacing: .15px; }
.st3 { border: 0; padding-left: 8px; gap: 17px; }
.st-right { margin-left: auto; display: flex; align-items: center; height: 100%; border-left: 1px solid #b5b8bd; padding-left: 3px; }
.vb { width: 20px; height: 19px; display: flex; align-items: center; justify-content: center; }
.vb.on { width: 19px; margin-right: 2px; background: linear-gradient(#ffe9a6, #fdd262); border: 1px solid #c89a3c; border-radius: 2px; }
.pct { width: 23px; text-align: right; margin-right: 9px; }
.zoombtn { width: 16px; height: 16px; border-radius: 50%; border: 1px solid #8d9299; background: linear-gradient(#fff, #d8dbdf); color: #444; font: bold 14px/13px "Liberation Sans", sans-serif; text-align: center; flex: none; }
.slider { width: 100px; height: 1px; background: #888; position: relative; }
.tick { position: absolute; left: 50px; top: -3px; width: 1px; height: 7px; background: #888; }
.knob { position: absolute; left: 31px; top: -7px; width: 9px; height: 14px; background: linear-gradient(#fff, #cfd2d6); border: 1px solid #777; border-radius: 1px 1px 4px 4px; }
.fit { width: 16px; height: 16px; margin: 0 5px 0 7px; background: #c5c8cd; border: 1px solid #777; display: flex; align-items: center; justify-content: center; }

/* taskbar */
.taskbar { height: 30px; flex: none; display: flex; align-items: center; color: #fff; background: linear-gradient(#3d77e6 0%, #2b64de 8%, #2560da 85%, #1b45a8 100%); }
.start { width: 96px; height: 30px; flex: none; display: flex; align-items: center; gap: 4px; padding-left: 10px; border-radius: 0 12px 12px 0; background: linear-gradient(#5da35a 0%, #3f8f3d 12%, #3a8a3a 80%, #2d6e2d 100%); box-shadow: inset -3px 0 4px rgba(0,0,0,.3); }
.start-t { font: italic bold 16px "Liberation Sans", sans-serif; letter-spacing: .3px; text-shadow: 1px 1px 1px #1a4d1a; }
.ql { width: 102px; flex: none; display: flex; align-items: center; gap: 7px; padding-left: 12px; }
.ql .more { margin-left: 12px; margin-top: -8px; font-size: 11px; color: #cfe0ff; }
.tasks { display: flex; gap: 1px; flex: none; height: 26px; }
.task { width: 159px; height: 26px; display: flex; align-items: center; gap: 4px; padding-left: 8px; background: linear-gradient(#4587f5, #3a78ec); border-radius: 2px; box-shadow: inset 0 1px 0 #6ea0f7; font-size: 11px; white-space: nowrap; }
.task.active { background: #1f50b8; box-shadow: inset 1px 1px 2px #153c90; }
.word { font: bold 13px "Liberation Sans", sans-serif; fill: #1c5fb8; }
.lang { margin-left: 173px; width: 16px; height: 16px; line-height: 16px; text-align: center; background: #3a6fdc; font-size: 11px; }
.tray { margin-left: auto; width: 75px; height: 100%; display: flex; align-items: center; background: linear-gradient(#1aa0f0 0%, #1089e6 90%, #0d6fc9 100%); position: relative; }
.chev { width: 18px; height: 18px; margin-left: -8px; border-radius: 50%; background: radial-gradient(circle at 40% 30%, #6fc0f5, #1860c8); display: flex; align-items: center; justify-content: center; flex: none; border: 1px solid #cfe6fa; }
.orange { width: 16px; height: 16px; margin-left: 1px; border-radius: 50%; border: 4px solid #f8a01c; background: #fff; flex: none; }
.clock { margin-left: 8px; font-size: 11.500px; }
```
